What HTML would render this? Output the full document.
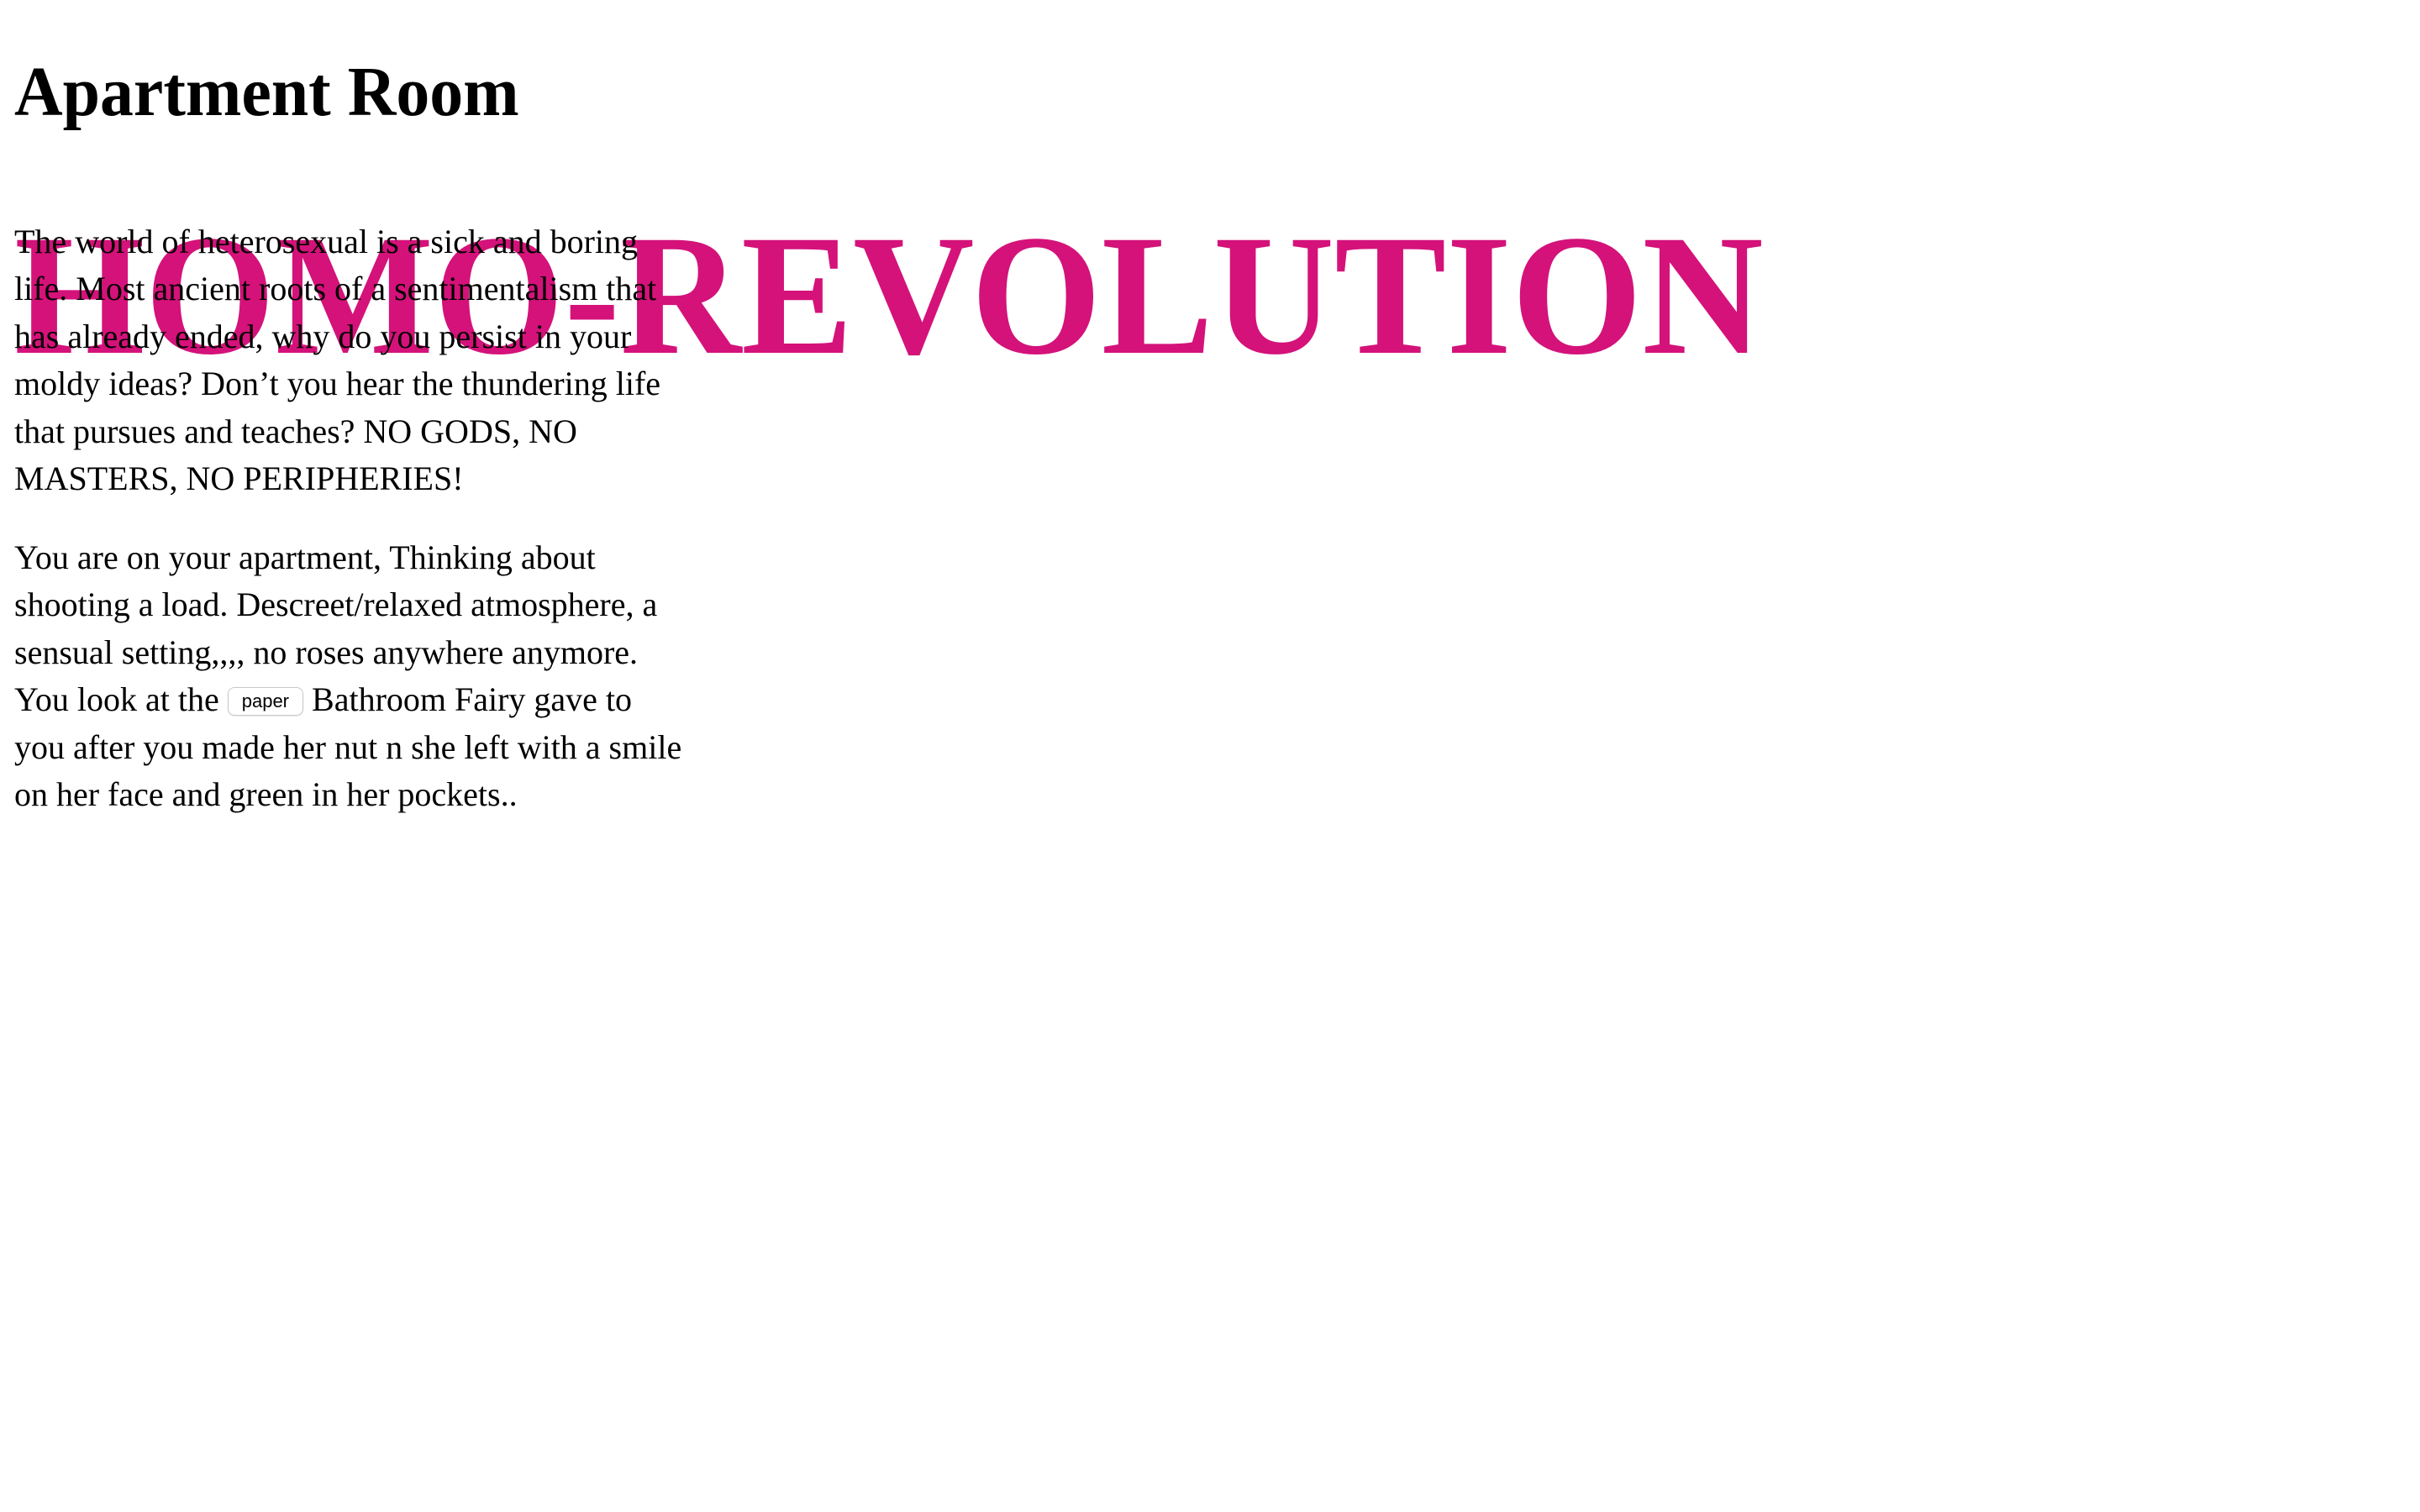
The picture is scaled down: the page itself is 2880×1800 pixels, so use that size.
<!DOCTYPE html>
<html><head><meta charset="utf-8"><style>
html,body{margin:0;padding:0;background:#fff;width:2880px;height:1800px;overflow:hidden}
body{font-family:"Liberation Serif","Times New Roman",serif;color:#000;position:relative}
h1{position:absolute;left:17px;top:60px;margin:0;font-size:84px;font-weight:bold;line-height:100px;white-space:nowrap;transform:scaleX(0.95);transform-origin:0 0}
.big{position:absolute;left:17px;top:249px;font-size:205px;line-height:205px;font-weight:bold;color:#d4127a;white-space:nowrap;transform:scaleX(0.974);transform-origin:0 0}
.p{position:absolute;left:17px;width:803px;font-size:40px;line-height:56.4px;margin:0}
.btn{display:inline-block;font-family:"Liberation Sans",Arial,sans-serif;font-size:22px;line-height:32px;height:32px;padding:0 16px;border:1px solid #c8c8c8;border-radius:8px;background:#fff;vertical-align:4px;box-shadow:0 1px 1px rgba(0,0,0,.08)}
</style></head><body>
<h1>Apartment Room</h1>
<div class="big">HOMO-REVOLUTION</div>
<p class="p" style="top:260px">The world of heterosexual is a sick and boring life. Most ancient roots of a sentimentalism that has already ended, why do you persist in your moldy ideas? Don’t you hear the thundering life that pursues and teaches? NO GODS, NO MASTERS, NO PERIPHERIES!</p>
<p class="p" style="top:636px">You are on your apartment, Thinking about shooting a load. Descreet/relaxed atmosphere, a sensual setting,,,, no roses anywhere anymore. You look at the <span class="btn">paper</span> Bathroom Fairy gave to<br>you after you made her nut n she left with a smile on her face and green in her pockets..</p>
</body></html>
